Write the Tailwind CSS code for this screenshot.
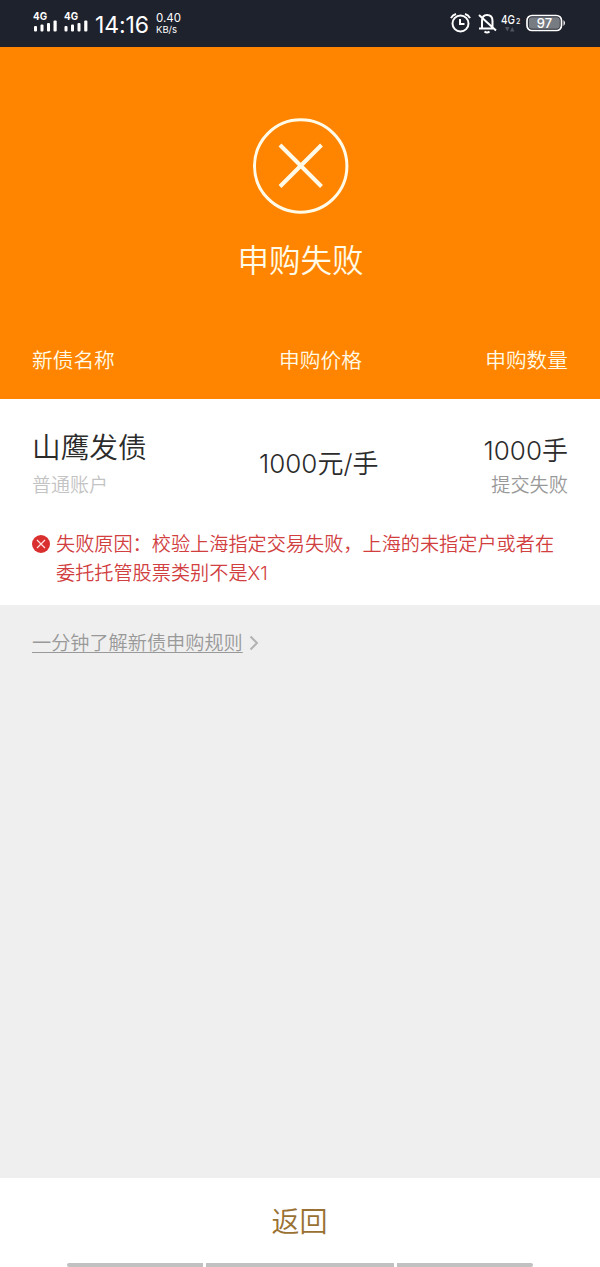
<!DOCTYPE html>
<html lang="zh-CN">
<head>
    <meta charset="UTF-8">
    <meta name="viewport" content="width=device-width, initial-scale=1.0">
    <title>申购失败</title>
    <script src="https://cdn.jsdelivr.net/npm/@tailwindcss/browser@4"></script>
</head>
<body class="bg-[#efefef] font-['Inter','Noto_Sans_CJK_SC',sans-serif] font-[350]">
    <div class="w-[600px] h-[1267px] flex flex-col overflow-hidden">
        <!-- 状态栏 -->
        <div class="h-[46.5px] shrink-0 bg-[#1e222d] text-white flex items-center justify-between px-[33px]">
            <div class="flex items-center">
                <svg class="w-[56px] h-[24px]" viewBox="0 0 56 24" fill="#fff">
                    <text x="0" y="9" font-size="10.5" font-weight="700" textLength="14" lengthAdjust="spacingAndGlyphs">4G</text>
                    <text x="31" y="9" font-size="10.5" font-weight="700" textLength="14" lengthAdjust="spacingAndGlyphs">4G</text>
                    <rect x="1" y="15" width="3" height="5.5" rx="1"/>
                    <rect x="7.5" y="13.5" width="3" height="7" rx="1"/>
                    <rect x="14" y="12" width="3" height="8.5" rx="1"/>
                    <rect x="20.5" y="9.5" width="3.2" height="11" rx="1"/>
                    <rect x="31.5" y="15" width="3" height="5.5" rx="1"/>
                    <rect x="38" y="13.5" width="3" height="7" rx="1"/>
                    <rect x="44.5" y="12" width="3" height="8.5" rx="1"/>
                    <rect x="51.2" y="9.5" width="3.2" height="11" rx="1"/>
                </svg>
                <span class="ml-[6px] mt-[3px] w-[55px] text-[23px] leading-6 font-normal tracking-[-0.1px]">14:16</span>
                <div class="ml-[6px] mt-[2px] font-normal">
                    <div class="text-[11.5px] leading-[12px]">0.40</div>
                    <div class="text-[9.5px] leading-[12px]">KB/s</div>
                </div>
            </div>
            <svg class="w-[118px] h-[24px]" viewBox="0 0 118 24" fill="none" stroke="#fff" stroke-width="2">
                <!-- 闹钟 -->
                <circle cx="11.5" cy="12.5" r="8"/>
                <path d="M11 8v5h4.5M2 7.2Q3.5 4 7 3M16 3Q19.5 4 21 7.2"/>
                <!-- 静音 -->
                <path d="M33 17.5V10Q33 4 38 4Q43.5 4 43.5 10V17.5M30 17.5H44M30 4L47 19.5"/>
                <path d="M35.5 20.5Q38 22.5 40.5 20.5"/>
                <!-- 网络 -->
                <text x="52" y="13" font-size="12" font-weight="500" fill="#fff" stroke="none" textLength="14" lengthAdjust="spacingAndGlyphs">4G</text>
                <text x="67" y="13" font-size="7" font-weight="500" fill="#fff" stroke="none">2</text>
                <path d="M56 16h4.5l-2.2 4.5zM61 20.5h4.5L63.2 16z" fill="#505461" stroke="none"/>
                <!-- 电量 -->
                <rect x="78" y="4.5" width="34.5" height="15" rx="5" stroke-width="1.7"/>
                <rect x="79.8" y="6.3" width="31" height="11.4" rx="3" fill="#777b82" stroke="none"/>
                <path d="M114.5 9Q117.5 12 114.5 15z" fill="#fff" stroke="none"/>
                <text x="95.5" y="16.7" text-anchor="middle" font-size="13" font-weight="500" fill="#fff" stroke="none">97</text>
            </svg>
        </div>

        <!-- 申购结果 -->
        <div class="h-[352px] shrink-0 bg-[#ff8500] text-[#fffbe8] px-8 flex flex-col items-center">
            <svg class="mt-[70.5px] ml-[2px] w-[98px] h-[98px] shrink-0" viewBox="0 0 98 98" fill="none" stroke="#fffbe8">
                <circle cx="48.7" cy="49" r="46.2" stroke-width="3"/>
                <path d="M28 28L69.5 69.5M69.5 28L28 69.5" stroke-width="4"/>
            </svg>
            <h1 class="mt-[22px] ml-px text-[31.5px] leading-[48px]">申购失败</h1>
            <div class="mt-[61px] w-full flex justify-between text-[20.7px] leading-[30px]">
                <span>新债名称</span>
                <span class="ml-[41px]">申购价格</span>
                <span>申购数量</span>
            </div>
        </div>

        <!-- 债券信息 -->
        <div class="h-[206.5px] shrink-0 bg-white px-8">
            <div class="h-[104px] pt-[29.5px] flex justify-between text-[#2b2b2b]">
                <div class="w-[227px]">
                    <div class="text-[28.7px] leading-[40px]">山鹰发债</div>
                    <div class="mt-[4px] text-[19px] leading-[28px] text-[#c3c3c3]">普通账户</div>
                </div>
                <div class="grow mt-[15.5px] text-[26px] leading-[40px]">1000元/手</div>
                <div class="text-right">
                    <div class="mt-[2.5px] text-[26px] leading-[40px]">1000手</div>
                    <div class="text-[19.2px] leading-[28px] text-[#999]">提交失败</div>
                </div>
            </div>
            <div class="mt-[27.5px] flex text-[#d1403f]">
                <svg class="mt-[5px] mr-[6px] w-[18px] h-[18px] shrink-0" viewBox="0 0 18 18">
                    <circle cx="9" cy="9" r="9" fill="#d9302f"/>
                    <path d="M5 5l8 8M13 5l-8 8" stroke="#ffe3e0" stroke-width="1.2"/>
                </svg>
                <p class="text-[19.17px] leading-[28.5px] whitespace-nowrap">失败原因：校验上海指定交易失败，上海的未指定户或者在<br>委托托管股票类别不是X1</p>
            </div>
        </div>

        <!-- 规则链接 -->
        <div class="grow px-8 pt-[24px]">
            <a href="#" class="flex items-center text-[#999]">
                <span class="text-[19.17px] leading-[28px] underline decoration-1 underline-offset-[2px]">一分钟了解新债申购规则</span>
                <svg class="ml-[6px] w-[10px] h-[16px]" viewBox="0 0 10 16" fill="none" stroke="#b3b3b3" stroke-width="2">
                    <path d="M1.5 1.5L8 8L1.5 14.5"/>
                </svg>
            </a>
        </div>

        <!-- 返回 -->
        <div class="h-[89px] shrink-0 bg-white flex flex-col items-center justify-between pt-[24px]">
            <button class="mr-px text-[28px] leading-[40px] text-[#997132]">返回</button>
            <div class="flex gap-[3px]">
                <div class="w-[136px] h-1 bg-[#c1c1c1] rounded-l-sm"></div>
                <div class="w-[188px] h-1 bg-[#c1c1c1]"></div>
                <div class="w-[136px] h-1 bg-[#c1c1c1] rounded-r-sm"></div>
            </div>
        </div>
    </div>
</body>
</html>
